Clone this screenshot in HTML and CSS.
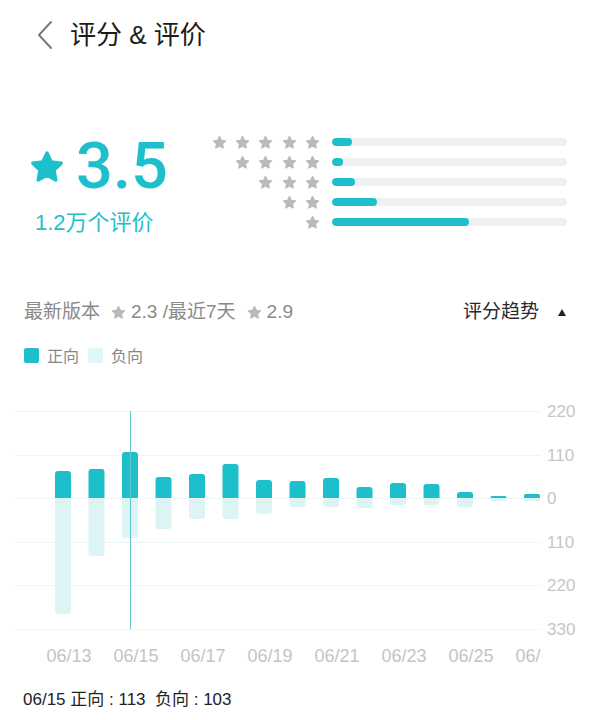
FILE: index.html
```html
<!DOCTYPE html>
<html lang="zh-CN">
<head>
<meta charset="utf-8">
<title>评分 &amp; 评价</title>
<link rel="stylesheet" href="styles.css">
</head>
<body>
<div class="page">
  <header class="nav">
    <svg class="back" viewBox="0 0 18 30"><polyline points="15,2 3,15 15,28" fill="none" stroke="#7a7a7a" stroke-width="2" stroke-linecap="round" stroke-linejoin="round"/></svg>
    <h1 class="title">评分 &amp; 评价</h1>
  </header>

  <section class="summary">
    <div class="score">
      <div class="score-main">
        <svg class="star-big" viewBox="0 0 24 24"><path class="star-path teal" d="M12 2.6l2.9 6 6.6.9-4.8 4.6 1.2 6.6L12 17.5l-5.9 3.2 1.2-6.6-4.8-4.6 6.6-.9z"/></svg>
        <span class="score-num">3.5</span>
      </div>
      <div class="score-count">1.2万个评价</div>
    </div>
    <div class="dist">
      <div class="dist-row">
        <div class="stars">
          <svg viewBox="0 0 24 24"><path class="star-path gray" d="M12 2.6l2.9 6 6.6.9-4.8 4.6 1.2 6.6L12 17.5l-5.9 3.2 1.2-6.6-4.8-4.6 6.6-.9z"/></svg>
          <svg viewBox="0 0 24 24"><path class="star-path gray" d="M12 2.6l2.9 6 6.6.9-4.8 4.6 1.2 6.6L12 17.5l-5.9 3.2 1.2-6.6-4.8-4.6 6.6-.9z"/></svg>
          <svg viewBox="0 0 24 24"><path class="star-path gray" d="M12 2.6l2.9 6 6.6.9-4.8 4.6 1.2 6.6L12 17.5l-5.9 3.2 1.2-6.6-4.8-4.6 6.6-.9z"/></svg>
          <svg viewBox="0 0 24 24"><path class="star-path gray" d="M12 2.6l2.9 6 6.6.9-4.8 4.6 1.2 6.6L12 17.5l-5.9 3.2 1.2-6.6-4.8-4.6 6.6-.9z"/></svg>
          <svg viewBox="0 0 24 24"><path class="star-path gray" d="M12 2.6l2.9 6 6.6.9-4.8 4.6 1.2 6.6L12 17.5l-5.9 3.2 1.2-6.6-4.8-4.6 6.6-.9z"/></svg>
        </div>
        <div class="track"><div class="fill" style="width:8.5%"></div></div>
      </div>
      <div class="dist-row">
        <div class="stars">
          <svg viewBox="0 0 24 24"><path class="star-path gray" d="M12 2.6l2.9 6 6.6.9-4.8 4.6 1.2 6.6L12 17.5l-5.9 3.2 1.2-6.6-4.8-4.6 6.6-.9z"/></svg>
          <svg viewBox="0 0 24 24"><path class="star-path gray" d="M12 2.6l2.9 6 6.6.9-4.8 4.6 1.2 6.6L12 17.5l-5.9 3.2 1.2-6.6-4.8-4.6 6.6-.9z"/></svg>
          <svg viewBox="0 0 24 24"><path class="star-path gray" d="M12 2.6l2.9 6 6.6.9-4.8 4.6 1.2 6.6L12 17.5l-5.9 3.2 1.2-6.6-4.8-4.6 6.6-.9z"/></svg>
          <svg viewBox="0 0 24 24"><path class="star-path gray" d="M12 2.6l2.9 6 6.6.9-4.8 4.6 1.2 6.6L12 17.5l-5.9 3.2 1.2-6.6-4.8-4.6 6.6-.9z"/></svg>
        </div>
        <div class="track"><div class="fill" style="width:4.7%"></div></div>
      </div>
      <div class="dist-row">
        <div class="stars">
          <svg viewBox="0 0 24 24"><path class="star-path gray" d="M12 2.6l2.9 6 6.6.9-4.8 4.6 1.2 6.6L12 17.5l-5.9 3.2 1.2-6.6-4.8-4.6 6.6-.9z"/></svg>
          <svg viewBox="0 0 24 24"><path class="star-path gray" d="M12 2.6l2.9 6 6.6.9-4.8 4.6 1.2 6.6L12 17.5l-5.9 3.2 1.2-6.6-4.8-4.6 6.6-.9z"/></svg>
          <svg viewBox="0 0 24 24"><path class="star-path gray" d="M12 2.6l2.9 6 6.6.9-4.8 4.6 1.2 6.6L12 17.5l-5.9 3.2 1.2-6.6-4.8-4.6 6.6-.9z"/></svg>
        </div>
        <div class="track"><div class="fill" style="width:9.8%"></div></div>
      </div>
      <div class="dist-row">
        <div class="stars">
          <svg viewBox="0 0 24 24"><path class="star-path gray" d="M12 2.6l2.9 6 6.6.9-4.8 4.6 1.2 6.6L12 17.5l-5.9 3.2 1.2-6.6-4.8-4.6 6.6-.9z"/></svg>
          <svg viewBox="0 0 24 24"><path class="star-path gray" d="M12 2.6l2.9 6 6.6.9-4.8 4.6 1.2 6.6L12 17.5l-5.9 3.2 1.2-6.6-4.8-4.6 6.6-.9z"/></svg>
        </div>
        <div class="track"><div class="fill" style="width:19.1%"></div></div>
      </div>
      <div class="dist-row">
        <div class="stars">
          <svg viewBox="0 0 24 24"><path class="star-path gray" d="M12 2.6l2.9 6 6.6.9-4.8 4.6 1.2 6.6L12 17.5l-5.9 3.2 1.2-6.6-4.8-4.6 6.6-.9z"/></svg>
        </div>
        <div class="track"><div class="fill" style="width:58.3%"></div></div>
      </div>
    </div>
  </section>

  <section class="meta">
    <div class="meta-left">
      <span>最新版本</span>
      <svg class="mstar" viewBox="0 0 24 24"><path class="star-path gray" d="M12 2.6l2.9 6 6.6.9-4.8 4.6 1.2 6.6L12 17.5l-5.9 3.2 1.2-6.6-4.8-4.6 6.6-.9z"/></svg>
      <span>2.3 /最近7天</span>
      <svg class="mstar" viewBox="0 0 24 24"><path class="star-path gray" d="M12 2.6l2.9 6 6.6.9-4.8 4.6 1.2 6.6L12 17.5l-5.9 3.2 1.2-6.6-4.8-4.6 6.6-.9z"/></svg>
      <span>2.9</span>
    </div>
    <div class="trend">
      <span>评分趋势</span>
      <svg class="caret" viewBox="0 0 8 7"><polygon points="4,0 8,7 0,7" fill="#222"/></svg>
    </div>
  </section>

  <div class="legend">
    <span class="swatch pos"></span><span>正向</span>
    <span class="swatch neg"></span><span>负向</span>
  </div>

  <svg class="chart" viewBox="0 0 593 275">
    <defs>
      <clipPath id="cp"><rect x="0" y="0" width="593" height="103"/></clipPath>
      <clipPath id="cn"><rect x="0" y="104" width="593" height="171"/></clipPath>
      <clipPath id="cx"><rect x="0" y="240" width="541" height="35"/></clipPath>
      <linearGradient id="g1" x1="0" x2="1" y1="0" y2="0">
        <stop offset="0" stop-color="#a8e3e7"/>
        <stop offset="1" stop-color="#5ccfd6"/>
      </linearGradient>
      <linearGradient id="gn1" x1="0" x2="0" y1="0" y2="1">
        <stop offset="0" stop-color="#e2f6f7"/>
        <stop offset="1" stop-color="#f0fafb"/>
      </linearGradient>
    </defs>
    <g class="grid">
      <line x1="14" x2="541" y1="16.5" y2="16.5"/>
      <line x1="14" x2="541" y1="60.5" y2="60.5"/>
      <line x1="14" x2="541" y1="103.5" y2="103.5"/>
      <line x1="14" x2="541" y1="147.5" y2="147.5"/>
      <line x1="14" x2="541" y1="190.5" y2="190.5"/>
      <line x1="14" x2="541" y1="234.5" y2="234.5"/>
    </g>
    <g class="pos" clip-path="url(#cp)">
      <rect x="55" y="76" width="16" height="31" rx="3" fill="url(#g1)"/>
      <rect x="88.5" y="74" width="16" height="33" rx="3"/>
      <rect x="122" y="57" width="16" height="50" rx="3"/>
      <rect x="155.5" y="82" width="16" height="25" rx="3"/>
      <rect x="189" y="79" width="16" height="28" rx="3"/>
      <rect x="222.5" y="69" width="16" height="38" rx="3"/>
      <rect x="256" y="85" width="16" height="22" rx="3"/>
      <rect x="289.5" y="86" width="16" height="21" rx="3"/>
      <rect x="323" y="83" width="16" height="24" rx="3"/>
      <rect x="356.5" y="92" width="16" height="15" rx="3"/>
      <rect x="390" y="88" width="16" height="19" rx="3"/>
      <rect x="423.5" y="89" width="16" height="18" rx="3"/>
      <rect x="457" y="97" width="16" height="10" rx="3"/>
      <rect x="490.5" y="101" width="16" height="6" rx="1.5"/>
      <rect x="524" y="99" width="16" height="8" rx="2"/>
    </g>
    <g class="neg" clip-path="url(#cn)">
      <rect x="55" y="100" width="16" height="119" rx="3" fill="url(#gn1)"/>
      <rect x="88.5" y="100" width="16" height="61" rx="3"/>
      <rect x="122" y="100" width="16" height="43" rx="3"/>
      <rect x="155.5" y="100" width="16" height="34" rx="3"/>
      <rect x="189" y="100" width="16" height="24" rx="3"/>
      <rect x="222.5" y="100" width="16" height="24" rx="3"/>
      <rect x="256" y="100" width="16" height="19" rx="3"/>
      <rect x="289.5" y="100" width="16" height="12" rx="3"/>
      <rect x="323" y="100" width="16" height="12" rx="3"/>
      <rect x="356.5" y="100" width="16" height="13" rx="3"/>
      <rect x="390" y="100" width="16" height="10" rx="3"/>
      <rect x="423.5" y="100" width="16" height="10" rx="3"/>
      <rect x="457" y="100" width="16" height="12" rx="3"/>
      <rect x="490.5" y="100" width="16" height="6" rx="1.5"/>
      <rect x="524" y="100" width="16" height="6" rx="1.5"/>
    </g>
    <line class="cursor" x1="130.5" x2="130.5" y1="16" y2="234"/>
    <g class="ylab">
      <text x="547" y="22">220</text>
      <text x="547" y="66">110</text>
      <text x="547" y="109">0</text>
      <text x="547" y="153">110</text>
      <text x="547" y="196">220</text>
      <text x="547" y="240">330</text>
    </g>
    <g class="xlab" clip-path="url(#cx)">
      <text x="69" y="267">06/13</text>
      <text x="136" y="267">06/15</text>
      <text x="203" y="267">06/17</text>
      <text x="270" y="267">06/19</text>
      <text x="337" y="267">06/21</text>
      <text x="404" y="267">06/23</text>
      <text x="471" y="267">06/25</text>
      <text x="538" y="267">06/27</text>
    </g>
  </svg>

  <div class="tip">06/15 正向 : 113&nbsp;&nbsp;负向 : 103</div>
</div>
</body>
</html>
```

FILE: styles.css
```css
html, body {
  margin: 0;
  padding: 0;
  background: #ffffff;
}

body {
  font-family: "Liberation Sans", "Noto Sans CJK SC", sans-serif;
  color: #222222;
}

.page {
  width: 593px;
}

/* navigation */
.nav {
  height: 70px;
  display: flex;
  align-items: center;
  padding-left: 36px;
  gap: 16px;
}

.back {
  width: 18px;
  height: 30px;
  flex: none;
}

.title {
  margin: 0;
  font-size: 26px;
  font-weight: normal;
  color: #1c1c1c;
  line-height: 30px;
}

/* stars */
.star-path {
  stroke-width: 2.2;
  stroke-linejoin: round;
}

.star-path.teal {
  fill: #1dbfca;
  stroke: #1dbfca;
}

.star-path.gray {
  fill: #b9babd;
  stroke: #b9babd;
}

/* summary */
.summary {
  display: flex;
  align-items: flex-start;
  margin-top: 62px;
  padding: 0 26px 0 29px;
}

.score {
  display: flex;
  flex-direction: column;
  margin-top: 2px;
}

.score-main {
  display: flex;
  align-items: center;
  gap: 11px;
  height: 65px;
}

.star-big {
  width: 36px;
  height: 36px;
  flex: none;
}

.score-num {
  font-family: Roboto, "Liberation Sans", sans-serif;
  font-weight: 500;
  font-size: 65px;
  line-height: 65px;
  color: #1dbfca;
}

.score-count {
  margin-top: 11px;
  margin-left: 6px;
  font-size: 22px;
  line-height: 26px;
  color: #25bfca;
}

.dist {
  margin-left: auto;
  display: flex;
  flex-direction: column;
}

.dist-row {
  display: flex;
  align-items: center;
  justify-content: flex-end;
  height: 20px;
  gap: 12px;
}

.stars {
  display: flex;
  gap: 8.3px;
}

.stars svg {
  width: 15px;
  height: 15px;
  display: block;
}

.track {
  width: 235px;
  height: 8px;
  border-radius: 4px;
  background: #edf0f1;
  overflow: hidden;
}

.fill {
  height: 100%;
  border-radius: 4px;
  background: #1dbfca;
}

/* meta line */
.meta {
  display: flex;
  justify-content: space-between;
  align-items: center;
  margin-top: 64px;
  padding: 0 27px 0 24px;
  font-size: 19px;
  line-height: 24px;
}

.meta-left {
  display: flex;
  align-items: center;
  color: #8a8a8a;
}

.mstar {
  width: 15px;
  height: 15px;
  margin: 0 5px 0 11px;
  flex: none;
}

.trend {
  display: flex;
  align-items: center;
  gap: 19px;
  color: #2a2a2a;
}

.caret {
  width: 8px;
  height: 7px;
}

/* legend */
.legend {
  display: flex;
  align-items: center;
  margin-top: 21px;
  padding-left: 24px;
  height: 20px;
  font-size: 16px;
  color: #888888;
}

.swatch {
  width: 15px;
  height: 15px;
  border-radius: 2px;
  margin-right: 8px;
}

.swatch.pos {
  background: #1dbfca;
}

.swatch.neg {
  background: #e1f5fa;
  margin-left: 9px;
}

/* chart */
.chart {
  display: block;
  width: 593px;
  height: 275px;
  margin-top: 30px;
}

.grid line {
  stroke: #ecf6f7;
  stroke-width: 1;
}

.pos rect {
  fill: #1dbfca;
}

.neg rect {
  fill: #ddf4f5;
}

.cursor {
  stroke: #62c8cf;
  stroke-width: 1;
}

.ylab text {
  font-family: "Liberation Sans", sans-serif;
  font-size: 17px;
  fill: #c6c6c6;
}

.xlab text {
  font-family: "Liberation Sans", sans-serif;
  font-size: 18px;
  fill: #c4c4c4;
  text-anchor: middle;
}

/* tooltip line */
.tip {
  margin-top: 19px;
  padding-left: 23px;
  font-size: 17px;
  line-height: 22px;
  color: #222222;
}
```
